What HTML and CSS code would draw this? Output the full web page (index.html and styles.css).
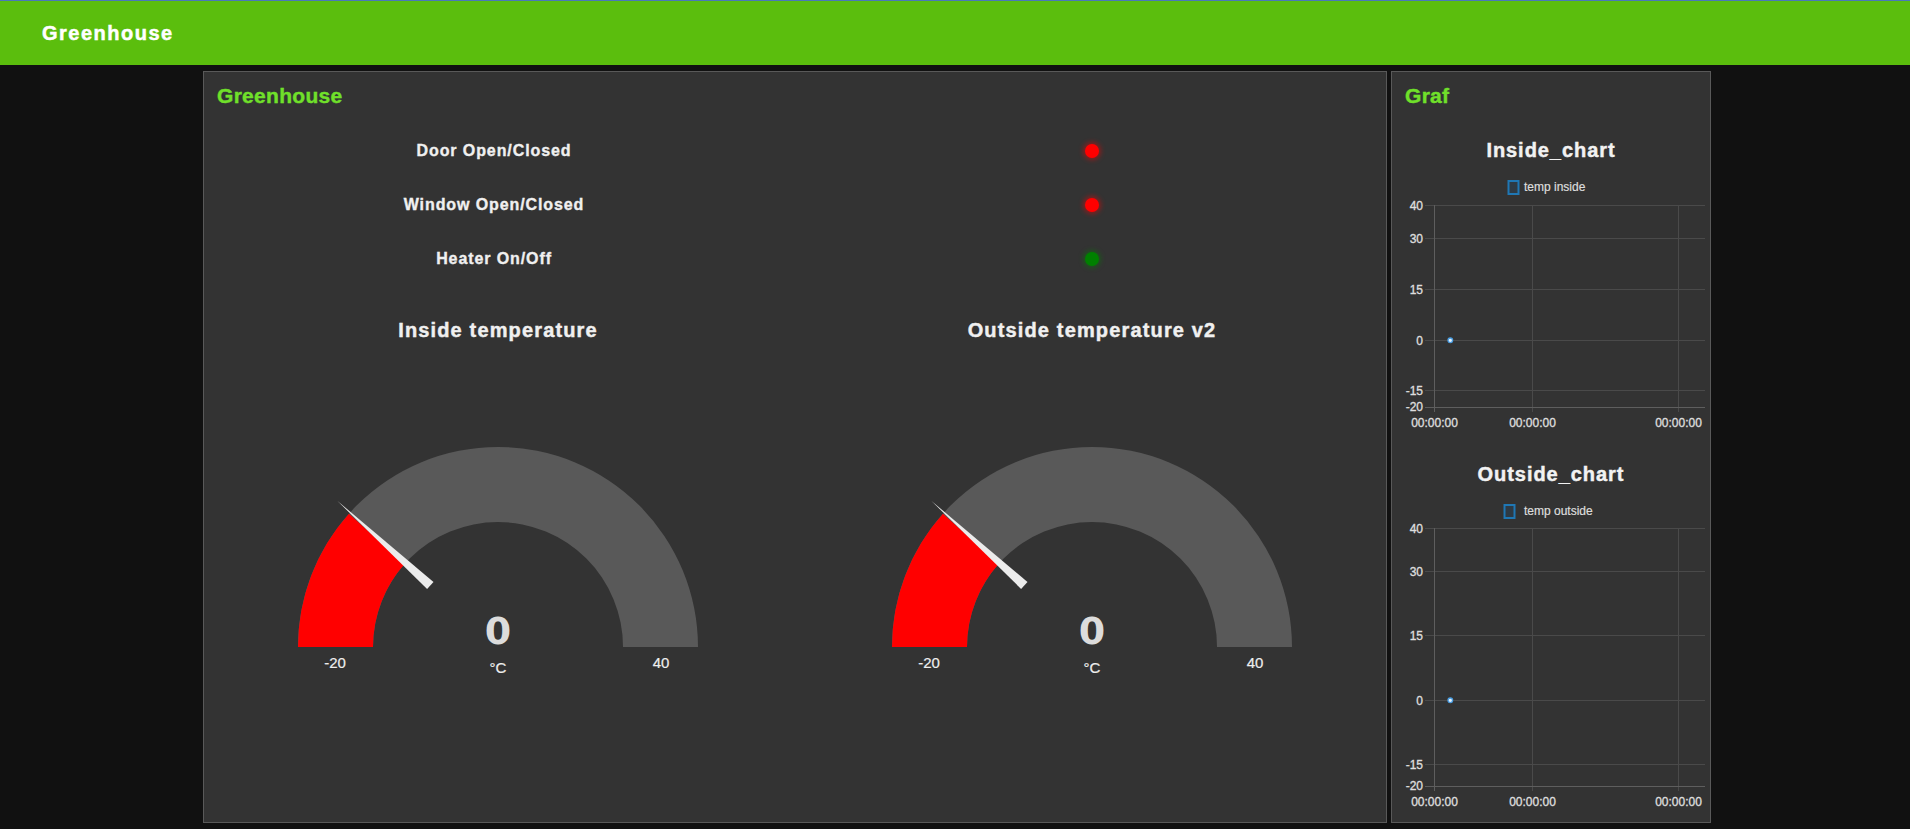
FILE: index.html
```
<!DOCTYPE html>
<html lang="en">
<head>
<meta charset="utf-8">
<title>Greenhouse</title>
<link rel="stylesheet" href="styles.css">
</head>
<body>
<header class="toolbar">Greenhouse</header>
<main class="layout">
  <section class="card card-main">
    <div class="card-title">Greenhouse</div>
    <div class="status-list">
      <div class="status-row">
        <div class="status-label">Door Open/Closed</div>
        <div class="status-led"><span class="led led-red"></span></div>
      </div>
      <div class="status-row">
        <div class="status-label">Window Open/Closed</div>
        <div class="status-led"><span class="led led-red"></span></div>
      </div>
      <div class="status-row">
        <div class="status-label">Heater On/Off</div>
        <div class="status-led"><span class="led led-green"></span></div>
      </div>
    </div>
    <div class="gauges">
      <div class="gauge">
        <div class="gauge-title">Inside temperature</div>
        <svg class="gauge-svg" width="588" height="340" viewBox="0 0 588 340">
          <path class="g-track" d="M94 296 A200 200 0 0 1 494 296 L419 296 A125 125 0 0 0 169 296 Z"/>
          <path class="g-fill" d="M94 296 A200 200 0 0 1 144.9 162.7 L200.8 212.7 A125 125 0 0 0 169 296 Z"/>
          <polygon class="g-needle" points="133.5,150 223.1,237.9 229.5,230.9"/>
          <text class="g-value" x="294" y="292.5">0</text>
          <text class="g-unit" x="294" y="321.5">°C</text>
          <text class="g-limit" x="131" y="317">-20</text>
          <text class="g-limit" x="457" y="317">40</text>
        </svg>
      </div>
      <div class="gauge">
        <div class="gauge-title">Outside temperature v2</div>
        <svg class="gauge-svg" width="588" height="340" viewBox="0 0 588 340">
          <path class="g-track" d="M94 296 A200 200 0 0 1 494 296 L419 296 A125 125 0 0 0 169 296 Z"/>
          <path class="g-fill" d="M94 296 A200 200 0 0 1 144.9 162.7 L200.8 212.7 A125 125 0 0 0 169 296 Z"/>
          <polygon class="g-needle" points="133.5,150 223.1,237.9 229.5,230.9"/>
          <text class="g-value" x="294" y="292.5">0</text>
          <text class="g-unit" x="294" y="321.5">°C</text>
          <text class="g-limit" x="131" y="317">-20</text>
          <text class="g-limit" x="457" y="317">40</text>
        </svg>
      </div>
    </div>
  </section>

  <section class="card card-side">
    <div class="card-title">Graf</div>
    <div class="chart chart-inside">
      <div class="chart-title">Inside_chart</div>
      <svg class="chart-svg" width="318" height="265" viewBox="0 0 318 265">
        <rect class="legend-box" x="116.5" y="11" width="10" height="13"/>
        <text class="legend-text" x="132" y="21.3">temp inside</text>
        <g class="grid">
          <line x1="33" y1="35.5" x2="313" y2="35.5"/>
          <line x1="33" y1="68.5" x2="313" y2="68.5"/>
          <line x1="33" y1="119.5" x2="313" y2="119.5"/>
          <line x1="33" y1="170.5" x2="313" y2="170.5"/>
          <line x1="33" y1="220.5" x2="313" y2="220.5"/>
          <line x1="140.5" y1="35" x2="140.5" y2="242"/>
          <line x1="286.5" y1="35" x2="286.5" y2="242"/>
        </g>
        <g class="axis">
          <line x1="42.5" y1="35" x2="42.5" y2="242"/>
          <line x1="33" y1="237.5" x2="313" y2="237.5"/>
        </g>
        <g class="ylabels">
          <text x="31" y="39.5">40</text>
          <text x="31" y="72.5">30</text>
          <text x="31" y="123.5">15</text>
          <text x="31" y="174.5">0</text>
          <text x="31" y="224.5">-15</text>
          <text x="31" y="240.5">-20</text>
        </g>
        <g class="xlabels">
          <text x="42.5" y="257">00:00:00</text>
          <text x="140.5" y="257">00:00:00</text>
          <text x="286.5" y="257">00:00:00</text>
        </g>
        <circle class="point" cx="58.3" cy="170.3" r="2.3"/>
      </svg>
    </div>
    <div class="chart chart-outside">
      <div class="chart-title">Outside_chart</div>
      <svg class="chart-svg" width="318" height="321" viewBox="0 0 318 321">
        <rect class="legend-box" x="112.5" y="11" width="10" height="13"/>
        <text class="legend-text" x="132" y="21.3">temp outside</text>
        <g class="grid">
          <line x1="33" y1="34.5" x2="313" y2="34.5"/>
          <line x1="33" y1="77.5" x2="313" y2="77.5"/>
          <line x1="33" y1="141.5" x2="313" y2="141.5"/>
          <line x1="33" y1="206.5" x2="313" y2="206.5"/>
          <line x1="33" y1="270.5" x2="313" y2="270.5"/>
          <line x1="140.5" y1="34" x2="140.5" y2="297"/>
          <line x1="286.5" y1="34" x2="286.5" y2="297"/>
        </g>
        <g class="axis">
          <line x1="42.5" y1="34" x2="42.5" y2="297"/>
          <line x1="33" y1="292.5" x2="313" y2="292.5"/>
        </g>
        <g class="ylabels">
          <text x="31" y="38.5">40</text>
          <text x="31" y="81.5">30</text>
          <text x="31" y="145.5">15</text>
          <text x="31" y="210.5">0</text>
          <text x="31" y="274.5">-15</text>
          <text x="31" y="295.5">-20</text>
        </g>
        <g class="xlabels">
          <text x="42.5" y="312">00:00:00</text>
          <text x="140.5" y="312">00:00:00</text>
          <text x="286.5" y="312">00:00:00</text>
        </g>
        <circle class="point" cx="58.3" cy="206.3" r="2.3"/>
      </svg>
    </div>
  </section>
</main>
</body>
</html>
```
FILE: styles.css
```
* {
  box-sizing: border-box;
}

html, body {
  margin: 0;
  padding: 0;
  background: #111111;
  font-family: "Liberation Sans", Arial, sans-serif;
  color: #eeeeee;
  overflow: hidden;
}

.toolbar {
  height: 65px;
  border-top: 1px solid #4a78b8;
  background: #5bbe0d;
  color: #ffffff;
  font-weight: bold;
  font-size: 20px;
  letter-spacing: 1.5px;
  -webkit-text-stroke: 0.5px #ffffff;
  line-height: 64px;
  padding-left: 42px;
}

.layout {
  display: flex;
  gap: 4px;
  margin-top: 6px;
  padding-left: 203px;
}

.card {
  height: 752px;
  background: #333333;
  border: 1px solid #595959;
}

.card-main {
  width: 1184px;
}

.card-side {
  width: 320px;
}

.card-title {
  height: 47px;
  line-height: 47px;
  padding-left: 13px;
  color: #70e02a;
  font-weight: bold;
  font-size: 21px;
  letter-spacing: 0.3px;
  -webkit-text-stroke: 0.4px #70e02a;
}

.status-list {
  margin-top: 5px;
}

.status-row {
  display: grid;
  grid-template-columns: 588px 588px;
  column-gap: 6px;
  height: 54px;
  align-items: center;
}

.status-label {
  text-align: center;
  padding-right: 8px;
  font-weight: bold;
  font-size: 16px;
  letter-spacing: 0.9px;
  -webkit-text-stroke: 0.35px #f0f0f0;
  color: #f0f0f0;
}

.status-led {
  display: flex;
  justify-content: center;
  align-items: center;
}

.led {
  display: block;
  width: 14px;
  height: 14px;
  border-radius: 50%;
}

.led-red {
  background: #ff0000;
  box-shadow: 0 0 5px 2px rgba(255, 0, 0, 0.45);
}

.led-green {
  background: #008000;
  box-shadow: 0 0 5px 2px rgba(0, 128, 0, 0.45);
}

.gauges {
  display: grid;
  grid-template-columns: 588px 588px;
  column-gap: 6px;
  margin-top: 24px;
}

.gauge-title {
  height: 41px;
  line-height: 41px;
  text-align: center;
  font-weight: bold;
  font-size: 20px;
  letter-spacing: 1.15px;
  -webkit-text-stroke: 0.45px #f0f0f0;
  color: #f0f0f0;
}

.gauge-svg {
  display: block;
}

.g-track {
  fill: #595959;
}

.g-fill {
  fill: #ff0000;
}

.g-needle {
  fill: #ececec;
}

.g-value {
  font-family: "DejaVu Sans", "Liberation Sans", sans-serif;
  font-weight: bold;
  font-size: 38px;
  fill: #dcdcdc;
  text-anchor: middle;
}

.g-unit,
.g-limit {
  font-family: "Liberation Sans", Arial, sans-serif;
  font-size: 15px;
  fill: #eeeeee;
  stroke: #eeeeee;
  stroke-width: 0.2px;
  text-anchor: middle;
}

.chart {
  margin-top: 11px;
}

.chart-outside {
  margin-top: 19px;
}

.chart-title {
  height: 40px;
  line-height: 40px;
  text-align: center;
  font-weight: bold;
  font-size: 20px;
  letter-spacing: 0.95px;
  -webkit-text-stroke: 0.45px #f2f2f2;
  color: #f2f2f2;
}

.chart-svg {
  display: block;
}

.legend-box {
  fill: #2e3a44;
  stroke: #1f77b4;
  stroke-width: 2;
}

.legend-text {
  font-family: "Liberation Sans", Arial, sans-serif;
  font-size: 12px;
  fill: #dddddd;
  stroke: #dddddd;
  stroke-width: 0.2px;
}

.grid line {
  stroke: #4a4a4a;
  stroke-width: 1;
}

.axis line {
  stroke: #5e5e5e;
  stroke-width: 1;
}

.ylabels text,
.xlabels text {
  font-family: "Liberation Sans", Arial, sans-serif;
  font-size: 12px;
  fill: #dddddd;
  stroke: #dddddd;
  stroke-width: 0.35px;
}

.ylabels text {
  text-anchor: end;
}

.xlabels text {
  text-anchor: middle;
}

.point {
  fill: #e6f2ff;
  stroke: #4a9de0;
  stroke-width: 1.3;
}
```
